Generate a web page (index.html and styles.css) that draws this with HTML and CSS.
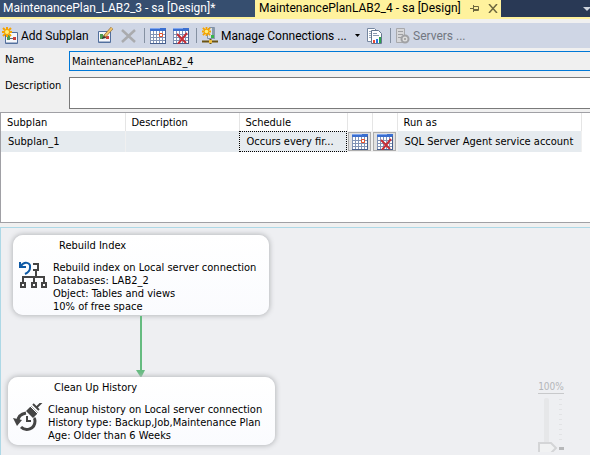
FILE: index.html
```html
<!DOCTYPE html>
<html lang="en">
<head>
<meta charset="utf-8">
<title>MaintenancePlanLAB2_4</title>
<link rel="stylesheet" href="styles.css">
</head>
<body>
<svg class="defs" aria-hidden="true">
  <symbol id="calendar" viewBox="0 0 16 16">
    <path fill="#fff" d="M0 1h16v14H0z"/>
    <path fill="#3b6fd0" d="M0 0h16v3H0z"/>
    <path fill="#7fa6ef" d="M0 0h10v1H0z"/>
    <path fill="none" stroke="#8193b5" d="M.5 3v12M3.5 3v12M6.5 3v12M9.5 3v12M12.5 3v12M0 6.5h15M0 9.5h15M0 12.5h15"/>
    <path fill="none" stroke="#465e8d" d="M0 15.5h16M15.5 2v14"/>
  </symbol>
  <symbol id="calendar-day" viewBox="0 0 16 16">
    <use href="#calendar"/>
    <path fill="#fff" stroke="#e8532a" d="M9.5 5.5h3v3h-3z"/>
  </symbol>
  <symbol id="calendar-remove" viewBox="0 0 16 16">
    <use href="#calendar"/>
    <path fill="none" stroke="#c52d36" stroke-width="2" d="M4 6l9 9M14 5l-9 11"/>
  </symbol>
  <symbol id="spark" viewBox="0 0 10 10">
    <path stroke="#f5a300" stroke-width="2" d="M5 0v10M0 5h10M1 1l8 8M9 1L1 9"/>
    <circle cx="5" cy="5" r="2" fill="#fff07a"/>
  </symbol>
  <symbol id="plan" viewBox="0 0 13 12">
    <path fill="#f5f7fb" stroke="#526f9d" d="M.5 .5h12v11H.5z"/>
    <path fill="#4b9b50" d="M2 3h3v5H2z"/>
    <path stroke="#667" d="M5 6.5h3"/>
    <path fill="#c9403c" d="M8 5h3v3H8z"/>
    <path stroke="#a9b7cf" d="M1 10.500h11"/>
  </symbol>
</svg>

<header class="tabs">
  <button class="tab">MaintenancePlan_LAB2_3 - sa [Design]*</button>
  <div class="tab tab-active">
    <button class="tab-name">MaintenancePlanLAB2_4 - sa [Design]</button>
    <button class="tab-tool" aria-label="Pin"><svg width="9" height="9" viewBox="0 0 9 9"><path fill="none" stroke="#6e683f" d="M0 4.500h3M3.500 1v7M4 2.500h4.500v4H4M4 5.500h4"/></svg></button>
    <button class="tab-tool" aria-label="Close"><svg width="10" height="9" viewBox="0 0 10 9"><path stroke="#6e683f" stroke-width="1.500" d="M1 0l8 9M9 0L1 9"/></svg></button>
  </div>
  <button class="tab-list" aria-label="Open documents"><svg width="8" height="4" viewBox="0 0 8 4"><path fill="#ced4dd" d="M0 0h8L4 4z"/></svg></button>
</header>

<nav class="toolbar" aria-label="Plan tools">
  <button class="tool tool-add"><svg width="16" height="17" viewBox="0 0 16 17"><use href="#plan" x="3" y="5" width="13" height="12"/><use href="#spark" x="0" y="0" width="10" height="10"/></svg>Add Subplan</button>
  <button class="tool" aria-label="Edit subplan"><svg width="16" height="17" viewBox="0 0 16 17"><use href="#plan" x="0" y="4" width="13" height="12"/><path stroke="#7b5928" stroke-width="3" d="M6 10l8-9"/><path stroke="#efc36a" stroke-width="2" d="M7 9l7-8"/><path fill="#333" d="M5 9l3 2-4 1z"/></svg></button>
  <button class="tool" aria-label="Delete subplan" disabled><svg width="16" height="14" viewBox="0 0 16 14"><path fill="none" stroke="#aaabae" stroke-width="2.500" d="M1 1l13 12M14 1L1 13"/></svg></button>
  <span class="divider"></span>
  <button class="tool" aria-label="Edit schedule"><svg width="16" height="16"><use href="#calendar-day"/></svg></button>
  <button class="tool" aria-label="Remove schedule"><svg width="16" height="16"><use href="#calendar-remove"/></svg></button>
  <span class="divider"></span>
  <button class="tool tool-manage"><svg width="16" height="17" viewBox="0 0 16 17"><path fill="#d9e1ea" stroke="#8292a6" d="M5.500 2.500l2-2h5v11h-7z"/><path fill="#8a9aac" d="M10 1h3v11h-3z"/><path fill="#39b54a" d="M9 8h3v3H9z"/><path stroke="#6c5415" stroke-width="2" d="M0 14.500h16M8.500 12v5"/><path fill="#f0c040" d="M7 13h3v3H7z"/><use href="#spark" x="0" y="0" width="9" height="9"/></svg>Manage Connections ...<svg class="caret" width="5" height="3" viewBox="0 0 5 3"><path d="M0 0h5L2.500 3z"/></svg></button>
  <button class="tool" aria-label="Reporting and logging"><svg width="16" height="16" viewBox="0 0 16 16"><path fill="#fff" stroke="#7687a0" d="M.5 .5h7l2 2v11h-9z"/><path stroke="#9aa9bd" d="M2 3.500h3M2 5.500h3M2 7.500h3M2 9.500h3"/><path fill="#fff" stroke="#64768f" d="M4.500 2.500h7l3 3v10h-10z"/><path stroke="#8b9bb2" d="M6 5.500h4M6 7.500h6"/><path fill="#e84a38" d="M6 12h2v3H6z"/><path fill="#2f75de" d="M9 11h2v4H9z"/><path fill="#2ba34b" d="M12 9h2v6h-2z"/></svg></button>
  <span class="divider"></span>
  <button class="tool" disabled><svg width="14" height="16" viewBox="0 0 14 16"><path fill="#d7d7d9" stroke="#a8a9ac" d="M.5 .5h8v14h-8z"/><path stroke="#9fa0a3" d="M2 3.500h5M2 6.500h5M2 9.500h3"/><circle cx="9" cy="11" r="3.500" fill="#ddd" stroke="#a0a1a4" stroke-width="2"/><circle cx="9" cy="11" r="1" fill="#999"/></svg>Servers ...</button>
</nav>

<main>
  <form class="fields">
    <label for="name">Name</label>
    <input id="name" class="name" value="MaintenancePlanLAB2_4">
    <label for="description">Description</label>
    <textarea id="description"></textarea>
  </form>

  <section class="grid">
    <table>
      <colgroup><col class="c-sub"><col class="c-desc"><col class="c-sched"><col class="c-btn"><col class="c-btn"><col class="c-run"></colgroup>
      <thead><tr><th>Subplan</th><th>Description</th><th>Schedule</th><th></th><th></th><th>Run as</th></tr></thead>
      <tbody><tr>
        <td>Subplan_1</td><td></td><td class="focused">Occurs every fir...</td>
        <td class="cell-btn"><button aria-label="Edit schedule"><svg width="16" height="16"><use href="#calendar-day"/></svg></button></td>
        <td class="cell-btn"><button aria-label="Remove schedule"><svg width="16" height="16"><use href="#calendar-remove"/></svg></button></td>
        <td>SQL Server Agent service account</td>
      </tr></tbody>
    </table>
  </section>

  <section class="canvas">
    <article class="node node-rebuild">
      <h2>Rebuild Index</h2>
      <div class="node-body">
        <svg width="30" height="30" viewBox="0 0 30 30"><path fill="none" stroke="#444" stroke-width="2" d="M15 3h5v6h-5M18 9v6M5 21v-5h21v5M16 15v6"/><path fill="#fff" stroke="#444" stroke-width="2" d="M3 22h4v4H3zM14 22h4v4h-4zM24 22h4v4h-4z"/><path fill="none" stroke="#0d59a5" stroke-width="2" d="M2 1v5h6M3 5c3-5 10-4 9 2 0 3-3 5-5 6"/></svg>
        <p>Rebuild index on Local server connection<br>Databases: LAB2_2<br>Object: Tables and views<br>10% of free space</p>
      </div>
    </article>
    <svg class="link" width="9" height="62" viewBox="0 0 9 62"><path fill="#65bb80" d="M4 0h2v54h3L5 62 0 54h4z"/></svg>
    <article class="node node-cleanup">
      <h2>Clean Up History</h2>
      <div class="node-body">
        <svg width="30" height="30" viewBox="0 0 30 30"><path fill="none" stroke="#444" stroke-width="3" d="M5 18c0-4 3-7 8-8M8 24c5 5 14 2 14-6 0-1 0-2-1-3"/><path fill="#444" d="M0 15l9 2-5 6zM13 8l5-5 7 7-5 5z"/><path fill="none" stroke="#fff" d="M17 3l8 8"/><path fill="none" stroke="#444" stroke-width="2" d="M14 13v5h4M20 1l6 6M23 5l6-6"/></svg>
        <p>Cleanup history on Local server connection<br>History type: Backup,Job,Maintenance Plan<br>Age: Older than 6 Weeks</p>
      </div>
    </article>
    <div class="zoom">
      <span>100%</span>
      <svg width="26" height="58" viewBox="0 0 26 58"><path fill="#e6e7e9" d="M6 6q0-2 2-2h1q2 0 2 2v43H6z"/><path stroke="#e2e3e5" d="M21 5.500h3M21 10.500h3M21 15.500h3M21 20.500h3M21 25.500h3M21 30.500h3M21 35.500h3M21 40.500h3M21 45.500h3"/><path fill="#f1f2f3" stroke="#d4d5d7" stroke-width="2" d="M1 49h12l5 5-5 5H1z"/><path fill="#b7b8ba" d="M21 53h5v3h-5z"/></svg>
    </div>
  </section>
</main>
</body>
</html>
```
FILE: styles.css
```css
* { box-sizing: border-box; }
body {
  margin: 0;
  min-height: 100vh;
  display: flex;
  flex-direction: column;
  overflow: hidden;
  background: #f0f0f0;
  color: #000;
  font: 11px/13px "DejaVu Sans Condensed", "DejaVu Sans", sans-serif;
}
button {
  margin: 0;
  padding: 0;
  border: 0;
  background: none;
  color: inherit;
  font: inherit;
  white-space: nowrap;
}
svg { display: block; flex: none; }
.defs { position: absolute; width: 0; height: 0; }

.tabs, .toolbar { font-family: Roboto, sans-serif; font-size: 12px; }
.tabs {
  display: flex;
  height: 19px;
  background: #293955;
  border-bottom: 2px solid #fff29d;
  line-height: 17px;
}
.tab { width: 255px; padding-left: 3px; background: #364e6f; color: #fff; text-align: left; }
.tab-active { display: flex; align-items: center; width: 246px; padding: 0 6px 0 4px; background: #fff29d; color: #000; }
.tab-name { flex: 1; text-align: left; }
.tab-tool { margin-left: 9px; }
.tab-list { margin-left: auto; margin-right: -1px; }

.toolbar {
  display: flex;
  align-items: center;
  height: 25px;
  margin-top: 4px;
  padding-left: 2px;
  gap: 7px;
  background: #cfd6e5;
  line-height: 16px;
}
.tool { display: flex; align-items: center; gap: 3px; }
.tool-add { width: 89px; }
.tool-manage { width: 158px; }
.tool:disabled { color: #727781; }
.divider { width: 1px; height: 15px; margin-right: -2px; background: #8591a2; }
.caret { margin-left: auto; }

main { flex: 1; display: flex; flex-direction: column; }
.fields {
  display: grid;
  grid-template-columns: 64px 1fr;
  row-gap: 6px;
  margin: 3px -4px 0 5px;
}
.fields label { padding-top: 2px; }
.fields input, .fields textarea {
  width: 100%;
  margin: 0;
  padding: 0 2px;
  border: 1px solid #7a7a7a;
  border-radius: 0;
  outline: 0;
  background: #fff;
  font: inherit;
  resize: none;
}
.fields .name { height: 20px; border-color: #0078d7; background: #f0f0f0; }
.fields textarea { height: 32px; }

.grid {
  height: 111px;
  margin-top: 3px;
  border: 1px solid #a0a0a5;
  border-right: 0;
  background: #fff;
}
table { width: 581px; border-collapse: collapse; table-layout: fixed; }
.c-sub { width: 124px; }
.c-desc { width: 114px; }
.c-sched { width: 108px; }
.c-btn { width: 25px; }
th, td { padding: 0 6px; border-right: 1px solid #e5e5e5; text-align: left; font-weight: 400; white-space: nowrap; }
th { height: 18px; }
td { height: 21px; padding-left: 7px; background: #e6ebef; border-color: #f0f0f0; }
.focused { outline: 1px dotted #000; outline-offset: -1px; }
.cell-btn { padding: 0; background: #f0f0f0; }
.cell-btn button { display: grid; place-items: center; width: 23px; height: 19px; margin: auto; border: 1px solid #adadad; background: #e1e1e1; }

.canvas {
  position: relative;
  flex: 1;
  min-height: 228px;
  margin-top: 4px;
  border-top: 1px solid #add8e6;
  border-left: 1px solid #add8e6;
  background: #eeeff2;
}
.node {
  position: absolute;
  padding: 4px 5px;
  border-radius: 10px;
  background: linear-gradient(#fff, #fafbfe);
  box-shadow: 0 0 5px 1px #b9bbbe;
}
.node-rebuild { left: 12px; top: 7px; width: 256px; height: 80px; }
.node-cleanup { left: 7px; top: 149px; width: 267px; height: 68px; }
.node h2 { margin: 0 0 9px 41px; font: inherit; }
.node-body { display: flex; gap: 5px; }
.node p { margin: 0; white-space: nowrap; }
.link { position: absolute; left: 135px; top: 88px; }
.zoom { position: absolute; right: 26px; top: 152px; width: 26px; color: #b4b6b9; font-size: 10px; text-align: center; }
.zoom span { display: block; border-bottom: 1px solid #c8c9cb; }
```
